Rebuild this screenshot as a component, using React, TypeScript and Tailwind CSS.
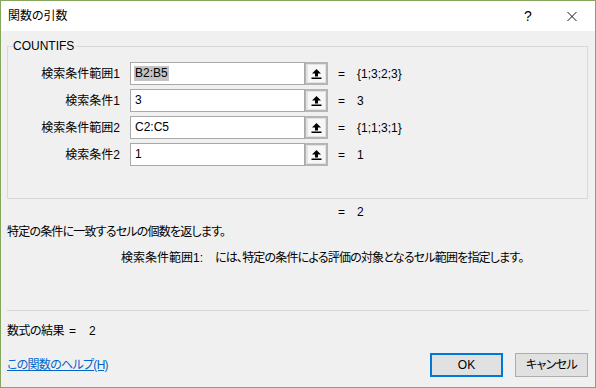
import React from "react";

const font = { fontFamily: '"Liberation Sans", "Noto Sans CJK JP", sans-serif' };

function ArrowIcon() {
  return (
    <svg width="11" height="12" viewBox="0 0 11 12">
      <path d="M5.5 1 L10 5.5 H7 V8.5 H4 V5.5 H1 Z" fill="#000" />
      <rect x="0.5" y="9.5" width="10" height="1.5" fill="#000" />
    </svg>
  );
}

function Row({ label, value, result, selected }: { label: string; value: string; result: string; selected?: boolean }) {
  return (
    <div className="flex items-center h-[23px]">
      <div className="w-[107px] text-right text-[12px] leading-[16px] text-black">{label}</div>
      <div className="ml-[10px] w-[175px] h-[23px] bg-white border border-[#a9a9a9] flex items-center pl-[3px]">
        {selected ? (
          <span className="bg-[#c4c4c4] text-[12px] leading-[15px] px-[1px] text-black">{value}</span>
        ) : (
          <span className="text-[12px] leading-[15px] px-[1px] text-black">{value}</span>
        )}
      </div>
      <div className="w-[23px] h-[23px] border-2 border-[#b5b5b5] border-l-[1px] bg-[#e3e3e3] flex items-center justify-center">
        <div className="w-[17px] h-[17px] bg-[#f7f7f7] flex items-center justify-center">
          <ArrowIcon />
        </div>
      </div>
      <div className="ml-[10px] w-[19px] text-[12px] leading-[16px] text-black">=</div>
      <div className="text-[12px] leading-[16px] text-black">{result}</div>
    </div>
  );
}

export default function App() {
  return (
    <div style={font} className="w-[596px] h-[388px] border border-[#85a65c] bg-[#f0f0f0] flex flex-col text-black [font-feature-settings:'palt']">
      {/* Title bar */}
      <div className="h-[30px] bg-white flex items-center shrink-0">
        <div className="pl-[7px] text-[12px] leading-[16px]">関数の引数</div>
        <div className="ml-auto w-[20px] text-center text-[14px] leading-[16px] mr-[29px] font-light">?</div>
        <div className="w-[10px] h-[10px] mr-[18px] flex items-center justify-center">
          <svg width="11" height="11" viewBox="0 0 11 11">
            <path d="M0.5 0.5 L10.5 10.5 M10.5 0.5 L0.5 10.5" stroke="#000" strokeWidth="1" />
          </svg>
        </div>
      </div>

      {/* Group box */}
      <fieldset className="mt-[7px] ml-[6px] mr-[7px] border border-[#d9d9d9] pl-[5px] pb-[32px] pt-[8px]">
        <legend className="text-[12px] leading-[16px] px-0 pr-[2px]">COUNTIFS</legend>
        <div className="flex flex-col gap-[4px]">
          <Row label="検索条件範囲1" value="B2:B5" result="{1;3;2;3}" selected />
          <Row label="検索条件1" value="3" result="3" />
          <Row label="検索条件範囲2" value="C2:C5" result="{1;1;3;1}" />
          <Row label="検索条件2" value="1" result="1" />
        </div>
      </fieldset>

      {/* Overall result */}
      <div className="mt-[5px] h-[16px] flex items-center pl-[337px] text-[12px] leading-[16px]">
        <span className="w-[19px]">=</span>
        <span>2</span>
      </div>

      <div className="mt-[4px] h-[16px] pl-[6px] text-[12px] leading-[16px] tracking-[-0.8px]">
        特定の条件に一致するセルの個数を返します。
      </div>

      <div className="mt-[10px] h-[16px] pl-[120px] flex text-[12px] leading-[16px]">
        <span className="w-[94px]">検索条件範囲1:</span>
        <span className="tracking-[-0.8px]">には、特定の条件による評価の対象となるセル範囲を指定します。</span>
      </div>

      <div className="mt-[44px] ml-[6px] mr-[6px] h-px bg-[#d9d9d9]" />

      <div className="mt-[12px] h-[16px] pl-[6px] flex text-[12px] leading-[16px]">
        <span className="tracking-[-0.5px]">数式の結果</span>
        <span className="ml-[5px]">=</span>
        <span className="ml-[13px]">2</span>
      </div>

      <div className="mt-[14px] h-[24px] flex items-center pl-[6px] pr-[7px]">
        <a className="text-[12px] leading-[16px] text-[#0066cc] underline cursor-pointer tracking-[-0.7px]">この関数のヘルプ(H)</a>
        <button className="ml-auto w-[73px] h-[24px] border-2 border-[#0078d7] bg-[#e1e1e1] text-[12px] leading-[16px] flex items-center justify-center">
          OK
        </button>
        <button className="ml-[12px] w-[73px] h-[24px] border border-[#adadad] bg-[#e1e1e1] text-[12px] leading-[16px] flex items-center justify-center tracking-[-0.6px]">
          キャンセル
        </button>
      </div>
    </div>
  );
}
